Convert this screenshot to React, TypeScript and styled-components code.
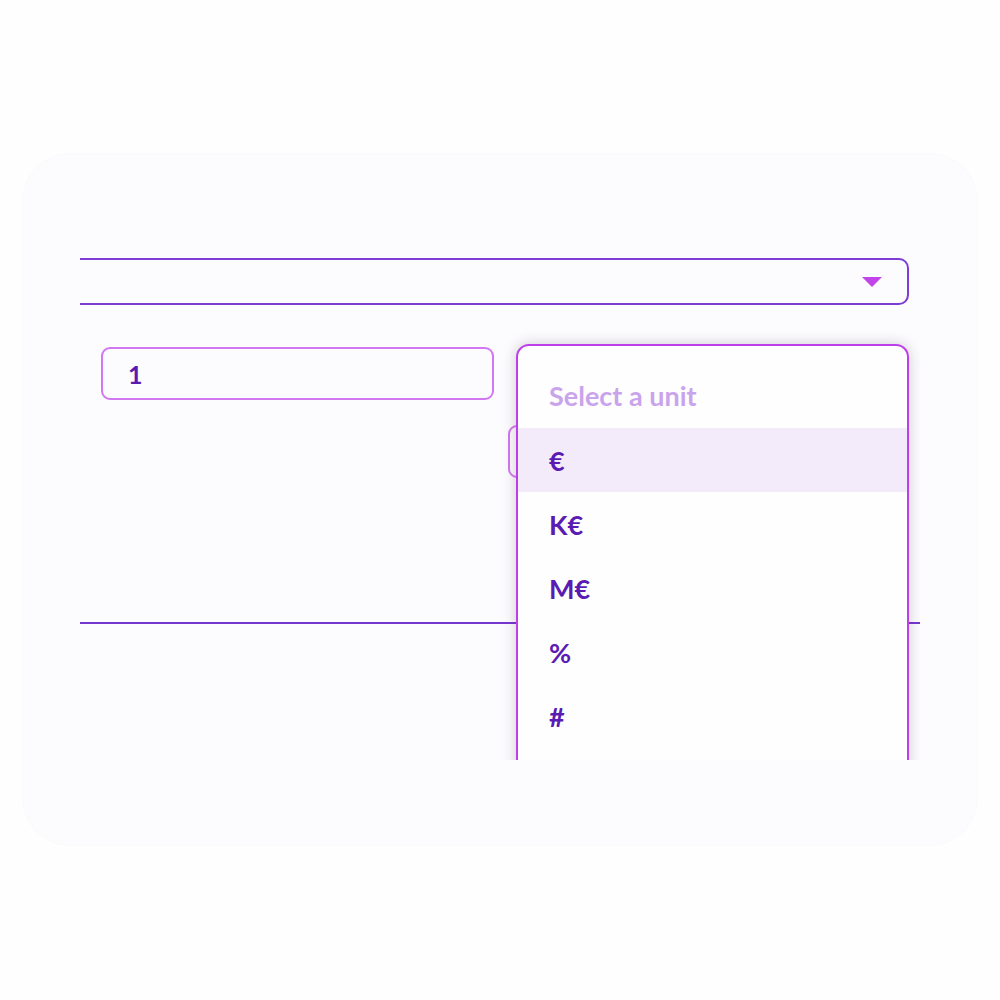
import React from "react";
import styled, { createGlobalStyle } from "styled-components";

const GlobalStyle = createGlobalStyle`
  html, body {
    margin: 0;
    padding: 0;
    background: #fefefe;
    font-family: Lato, "Open Sans", sans-serif;
  }
`;

const Page = styled.div`
  width: 1000px;
  height: 1000px;
  padding: 154px 23px 0;
  box-sizing: border-box;
`;

const Card = styled.div`
  width: 954px;
  height: 691px;
  box-sizing: border-box;
  padding: 46px 57px 0;
  border-radius: 48px;
  background: #fcfbfd;
  box-shadow: 0 0 0 1px rgba(248, 246, 249, 0.6);
`;

const Viewport = styled.div`
  position: relative;
  width: 840px;
  height: 560px;
  overflow: hidden;
  display: flex;
  flex-direction: column;
`;

const SelectBox = styled.div`
  margin: 58px 11px 0 -12px;
  height: 47px;
  box-sizing: border-box;
  border: 2px solid #7e3cd6;
  border-radius: 10px;
  display: flex;
  align-items: center;
  justify-content: flex-end;
  padding-right: 25px;
`;

const Caret = styled.svg`
  width: 20px;
  height: 10px;
  display: block;
`;

const FieldsSection = styled.div`
  margin-top: 42px;
  padding: 0 11px 144px 21px;
  display: grid;
  grid-template-columns: 393px 1fr;
  column-gap: 14px;
  align-items: start;
  border-bottom: 2px solid #7636d0;
`;

const ValueInput = styled.div`
  height: 53px;
  box-sizing: border-box;
  border: 2px solid #d277f2;
  border-radius: 9px;
  display: flex;
  align-items: center;
  padding-left: 25px;
  font-size: 25px;
  font-weight: 700;
  color: #5a1ab2;
`;

const UnitTrigger = styled.div`
  margin-top: 78px;
  height: 53px;
  box-sizing: border-box;
  border: 2px solid #d277f2;
  border-radius: 9px;
`;

const Menu = styled.div`
  position: absolute;
  left: 436px;
  top: 144px;
  width: 393px;
  height: 480px;
  box-sizing: border-box;
  border: 2px solid #bd3eea;
  border-radius: 13px;
  background: #fffeff;
  box-shadow: 0 0 14px rgba(60, 40, 70, 0.22);
  padding-top: 16px;
  display: flex;
  flex-direction: column;
`;

const MenuRow = styled.div<{ $active?: boolean; $placeholder?: boolean }>`
  height: ${(p) => (p.$placeholder ? 66 : 64)}px;
  flex-shrink: 0;
  display: flex;
  align-items: center;
  padding-left: 31px;
  font-size: 27px;
  font-weight: 700;
  color: ${(p) => (p.$placeholder ? "#c9a4ec" : "#5a1bb3")};
  background: ${(p) => (p.$active ? "#f3eafa" : "transparent")};
`;

const units = ["€", "K€", "M€", "%", "#"];

export default function App() {
  return (
    <>
      <GlobalStyle />
      <Page>
        <Card>
          <Viewport>
            <SelectBox>
              <Caret viewBox="0 0 20 10">
                <polygon points="0,0 20,0 10,10" fill="#c044e8" />
              </Caret>
            </SelectBox>
            <FieldsSection>
              <ValueInput>1</ValueInput>
              <UnitTrigger />
            </FieldsSection>
            <Menu>
              <MenuRow $placeholder>Select a unit</MenuRow>
              {units.map((u, i) => (
                <MenuRow key={u} $active={i === 0}>
                  {u}
                </MenuRow>
              ))}
            </Menu>
          </Viewport>
        </Card>
      </Page>
    </>
  );
}
